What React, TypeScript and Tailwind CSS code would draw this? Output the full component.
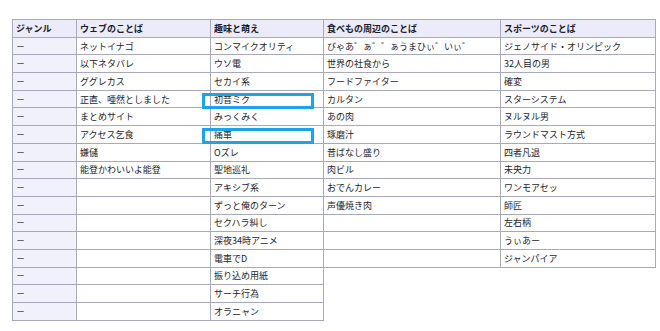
const rows: (string | null)[][] = [
  ['ネットイナゴ', 'コンマイクオリティ', 'びゃあ゛ぁ゛゛ぁうまひぃ゛いぃ゛', 'ジェノサイド・オリンピック'],
  ['以下ネタバレ', 'ウソ電', '世界の社食から', '32人目の男'],
  ['ググレカス', 'セカイ系', 'フードファイター', '確変'],
  ['正直、唖然としました', '初音ミク', 'カルタン', 'スターシステム'],
  ['まとめサイト', 'みっくみく', 'あの肉', 'ヌルヌル男'],
  ['アクセス乞食', '痛車', '琢磨汁', 'ラウンドマスト方式'],
  ['嫌儲', 'Oズレ', '昔ばなし盛り', '四者凡退'],
  ['能登かわいいよ能登', '聖地巡礼', '肉ビル', '未央力'],
  ['', 'アキシブ系', 'おでんカレー', 'ワンモアセッ'],
  ['', 'ずっと俺のターン', '声優焼き肉', '師匠'],
  ['', 'セクハラ糾し', '', '左右柄'],
  ['', '深夜34時アニメ', '', 'うぃあー'],
  ['', '電車でD', '', 'ジャンパイア'],
  ['', '振り込め用紙', null, null],
  ['', 'サーチ行為', null, null],
  ['', 'オラニャン', null, null],
];

const cell = 'border border-[#a9a9bd] px-[3px] py-0 text-left align-middle whitespace-nowrap';

export default function App() {
  return (
    <div className="relative w-[660px] h-[331px] bg-white pl-[12px] pt-[19px] font-['Noto_Sans_CJK_JP',sans-serif] text-[9px] text-[#1c1c2c] leading-none">
      <table className="table-fixed border-collapse w-[643px]">
        <colgroup>
          <col className="w-[64px]" />
          <col className="w-[134px]" />
          <col className="w-[113px]" />
          <col className="w-[177px]" />
          <col className="w-[155px]" />
        </colgroup>
        <thead>
          <tr className="h-[17.7px] bg-[#ebebf9]">
            <th className={`${cell} font-bold`}>ジャンル</th>
            <th className={`${cell} font-bold`}>ウェブのことば</th>
            <th className={`${cell} font-bold`}>趣味と萌え</th>
            <th className={`${cell} font-bold`}>食べもの周辺のことば</th>
            <th className={`${cell} font-bold`}>スポーツのことば</th>
          </tr>
        </thead>
        <tbody>
          {rows.map((r, i) => (
            <tr key={i} className="h-[17.7px]">
              <td className={`${cell} bg-[#f1f1fc]`}>－</td>
              <td className={cell}>{r[0]}</td>
              <td className={cell}>{r[1]}</td>
              {r[2] === null ? (
                <>
                  <td className="border-0 p-0" />
                  <td className="border-0 p-0" />
                </>
              ) : (
                <>
                  <td className={cell}>{r[2]}</td>
                  <td className={cell}>{r[3]}</td>
                </>
              )}
            </tr>
          ))}
        </tbody>
      </table>

      {/* 強調枠 */}
      <div className="absolute left-[202px] top-[93px] w-[112px] h-[16px] border-[3px] border-[#1ca4ea]" />
      <div className="absolute left-[202px] top-[128px] w-[112px] h-[16px] border-[3px] border-[#1ca4ea]" />
    </div>
  );
}
